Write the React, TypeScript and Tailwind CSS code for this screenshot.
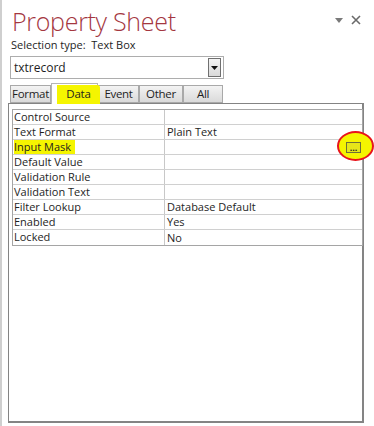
import { useState } from "react";

const rows: { label: string; value: string; mask?: boolean }[] = [
  { label: "Control Source", value: "" },
  { label: "Text Format", value: "Plain Text" },
  { label: "Input Mask", value: "", mask: true },
  { label: "Default Value", value: "" },
  { label: "Validation Rule", value: "" },
  { label: "Validation Text", value: "" },
  { label: "Filter Lookup", value: "Database Default" },
  { label: "Enabled", value: "Yes" },
  { label: "Locked", value: "No" },
];

const tabs = ["Format", "Data", "Event", "Other", "All"];
const tabWidths: Record<string, string> = {
  Format: "w-[41px]",
  Data: "w-[47px]",
  Event: "w-[41px]",
  Other: "w-[44px]",
  All: "w-[40px]",
};

export default function App() {
  const [active, setActive] = useState("Data");

  return (
    <div
      className="w-[374px] h-[426px] bg-white border-l-2 border-[#cfcfcf] text-[#1e1e1e] overflow-hidden"
      style={{ fontFamily: "'Open Sans', 'Noto Sans', sans-serif" }}
    >
      {/* Header */}
      <div className="flex items-start justify-between pl-[10px] pr-[13px] pt-[6px]">
        <h1 className="text-[25px] font-light leading-[30px] text-[#a4373f] tracking-[-0.3px]">
          Property Sheet
        </h1>
        <div className="flex items-center gap-[8px] pt-[9px]">
          <svg width="8" height="5" viewBox="0 0 8 5">
            <path d="M0 0h8L4 5z" fill="#7a7a7a" />
          </svg>
          <svg width="10" height="10" viewBox="0 0 10 10">
            <path d="M1 1l8 8M9 1l-8 8" stroke="#6a6a6a" strokeWidth="1.6" />
          </svg>
        </div>
      </div>
      <div className="pl-[9px] text-[11px] leading-[14px] mt-[2px]">
        Selection type:&nbsp; Text Box
      </div>

      {/* Combo box */}
      <div className="ml-[8px] mt-[4px] w-[214px] h-[23px] border border-[#adadad] flex items-center justify-between pl-[3px] pr-[2px]">
        <span className="text-[12px]">txtrecord</span>
        <div className="w-[13px] h-[19px] border border-[#707070] bg-gradient-to-b from-[#f4f4f4] to-[#d9d9d9] flex items-center justify-center">
          <svg width="7" height="4" viewBox="0 0 7 4">
            <path d="M0 0h7L3.5 4z" fill="#111" />
          </svg>
        </div>
      </div>

      {/* Tabs */}
      <div className="ml-[8px] mt-[3px] flex items-end h-[21px] relative z-10">
        {tabs.map((t) => {
          const isActive = t === active;
          return isActive ? (
            <button
              key={t}
              onClick={() => setActive(t)}
              className={`${tabWidths[t]} h-[21px] bg-white border border-b-0 border-[#b5b5b5] -mb-[1px] pt-[1px] pl-[5px] pr-0 relative`}
            >
              <div className="h-full -mr-[3px] bg-[#f5f500] rounded-tr-[3px] text-[11.5px] leading-[15px] tracking-[-0.2px] flex justify-center pt-[1px]">
                {t}
              </div>
            </button>
          ) : (
            <button
              key={t}
              onClick={() => setActive(t)}
              className={`${tabWidths[t]} h-[18px] border border-[#a9a9a9] bg-gradient-to-b from-[#f3f3f3] to-[#dadada] text-[11.5px] leading-[16px] tracking-[-0.3px] flex items-center justify-center`}
            >
              {t}
            </button>
          );
        })}
      </div>

      {/* Panel */}
      <div className="ml-[6px] w-[356px] h-[320px] border border-[#848484] border-r-2 border-b-2 pt-[5px] pl-[3px]">
        <div className="w-[351px] border border-[#a5a5a5]">
          {rows.map((r, i) => (
            <div
              key={r.label}
              className={`flex h-[15px] text-[11px] leading-[14px] ${i < rows.length - 1 ? "border-b border-[#d0d0d0]" : ""}`}
            >
              <div className="w-[152px] border-r border-[#c8c8c8] pl-[1px]">
                <span className={r.mask ? "bg-[#f5f500] pr-[4px] inline-block h-[14px]" : ""}>{r.label}</span>
              </div>
              <div className="flex-1 pl-[2px] flex items-center justify-between">
                <span>{r.value}</span>
                {r.mask && (
                  <div className="relative mr-[1px] flex items-center">
                    <div className="absolute -left-[9px] -top-[11px] w-[37px] h-[30px] rounded-[50%] border-2 border-[#e8141b] bg-[#f5f500]" />
                    <div className="relative w-[15px] h-[11px] border border-[#6f6f3a] bg-[#e6e619] flex items-center justify-center text-[9px] font-bold leading-none">
                      ...
                    </div>
                  </div>
                )}
              </div>
            </div>
          ))}
        </div>
      </div>
    </div>
  );
}
